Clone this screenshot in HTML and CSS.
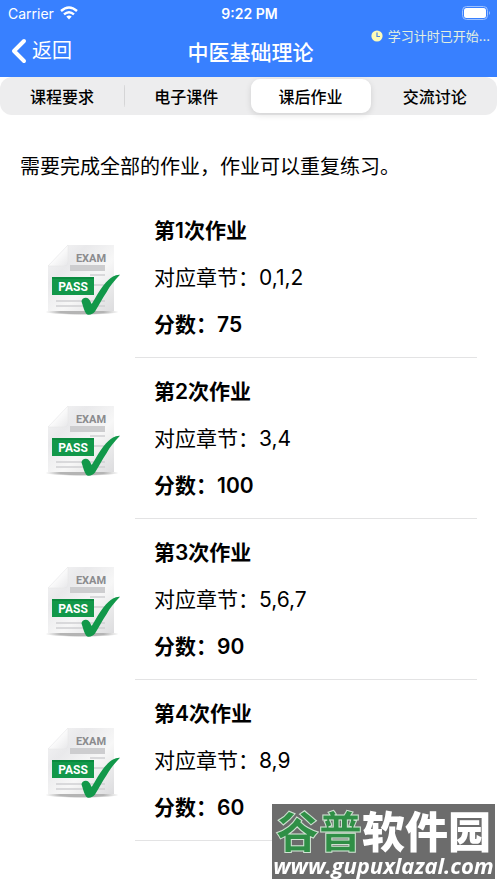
FILE: index.html
```html
<!DOCTYPE html>
<html lang="zh-CN">

<head>
    <meta charset="UTF-8">
    <meta name="viewport" content="width=device-width, initial-scale=1.0">
    <title>中医基础理论</title>
    <link rel="stylesheet" href="styles.css">
</head>

<body>
    <svg class="gradients" aria-hidden="true">
        <defs>
            <linearGradient id="paper" x1="0" y1="0" x2="1" y2="1">
                <stop offset="0" stop-color="#f6f6f7" />
                <stop offset="0.3" stop-color="#e9e9eb" />
                <stop offset="0.6" stop-color="#f7f7f7" />
                <stop offset="1" stop-color="#dcdcde" />
            </linearGradient>
            <linearGradient id="fold" x1="0" y1="0" x2="1" y2="1">
                <stop offset="0.4" stop-color="#ffffff" />
                <stop offset="1" stop-color="#e8e8ea" />
            </linearGradient>
            <radialGradient id="shade">
                <stop offset="0.6" stop-color="#b4b4b4" />
                <stop offset="1" stop-color="#ffffff" />
            </radialGradient>
        </defs>
    </svg>
    <svg class="symbols" aria-hidden="true">
        <symbol id="exam-pass" viewBox="0 -2 90 90">
            <ellipse cx="42" cy="77" rx="37" ry="3" fill="url(#shade)" />
            <path d="M28 10H74V76H8V31Z" fill="url(#paper)" />
            <path d="M28 10V27Q28 31 24 31H8Z" fill="url(#fold)" stroke="#e4e4e6" stroke-width="0.5" />
            <path d="M30 30H65V36H30Z" fill="#cdcdcf" />
            <path d="M50 40H65M50 50H65M16 66H65M16 71H65" stroke="#cfcfd2" stroke-width="1.5" />
            <text class="exam-text" x="51" y="27">EXAM</text>
            <path d="M12 42H54V60H12Z" fill="#12984a" />
            <path d="M12 42H54V44H12Z" fill="#0b8a3f" />
            <text class="pass-text" x="33" y="56">PASS</text>
            <path d="M41.500 66.500C41.500 64 44 62.500 46 62.700C49 63 50 65.500 51.700 69C56 62 59 56 63 51C67 46 70 43 73 41.500Q76 39.600 80 39.800C74 46 70 51 66.700 57C62 64 59 70 55 76.500C53 79.500 48 81 46 78.500C43.500 74.500 43 70.500 41.500 66.500Z" fill="#12984a" />
        </symbol>
    </svg>

    <header class="header">
        <div class="status-bar">
            <div class="carrier">
                <span>Carrier</span>
                <svg width="18" height="14" viewBox="0 0 18 14" fill="none" stroke="#fff" stroke-width="2.4">
                    <path d="M1 5Q9-2 17 5M4 8.4Q9 4 14 8.4" />
                    <path d="M6.3 10.6Q9 8.4 11.7 10.6L9 13.4Z" fill="#fff" stroke="none" />
                </svg>
            </div>
            <div class="clock">9:22 PM</div>
            <svg class="battery" width="29" height="14" viewBox="0 0 29 14">
                <rect x="0.5" y="0.5" width="25" height="13" rx="4" fill="none" stroke="#9dc1ff" />
                <rect x="2" y="2" width="22" height="10" rx="2.5" fill="#fff" />
                <path d="M27 5Q29 7 27 9Z" fill="#9dc1ff" />
            </svg>
        </div>
        <div class="nav-bar">
            <button class="back" type="button">
                <svg width="16" height="26" viewBox="0 0 16 26" fill="none" stroke="#fff" stroke-width="4" stroke-linecap="round" stroke-linejoin="round">
                    <path d="M13 3L3 13L13 23" />
                </svg>
                <span>返回</span>
            </button>
            <h1 class="title">中医基础理论</h1>
            <div class="timer">
                <svg width="12" height="12" viewBox="0 0 12 12">
                    <circle cx="6" cy="6" r="5.6" fill="#fdfbb8" />
                    <path d="M6 2.5V6.5H9" fill="none" stroke="#4a86e8" stroke-width="1.2" />
                </svg>
                <span>学习计时已开始...</span>
            </div>
        </div>
    </header>

    <nav class="tabs">
        <button class="tab" type="button">课程要求</button>
        <button class="tab divided" type="button">电子课件</button>
        <button class="tab active" type="button">课后作业</button>
        <button class="tab" type="button">交流讨论</button>
    </nav>

    <main>
        <p class="intro">需要完成全部的作业，作业可以重复练习。</p>
        <ul class="homework-list">
            <li class="homework">
                <svg class="homework-icon"><use href="#exam-pass" /></svg>
                <div class="homework-info">
                    <h2>第1次作业</h2>
                    <p>对应章节：0,1,2</p>
                    <p class="score">分数：75</p>
                </div>
            </li>
            <li class="homework">
                <svg class="homework-icon"><use href="#exam-pass" /></svg>
                <div class="homework-info">
                    <h2>第2次作业</h2>
                    <p>对应章节：3,4</p>
                    <p class="score">分数：100</p>
                </div>
            </li>
            <li class="homework">
                <svg class="homework-icon"><use href="#exam-pass" /></svg>
                <div class="homework-info">
                    <h2>第3次作业</h2>
                    <p>对应章节：5,6,7</p>
                    <p class="score">分数：90</p>
                </div>
            </li>
            <li class="homework">
                <svg class="homework-icon"><use href="#exam-pass" /></svg>
                <div class="homework-info">
                    <h2>第4次作业</h2>
                    <p>对应章节：8,9</p>
                    <p class="score">分数：60</p>
                </div>
            </li>
        </ul>
    </main>

    <div class="watermark">
        <div class="watermark-name"><span>谷普</span>软件园</div>
        <div class="watermark-url">www.gupuxlazal.com</div>
    </div>
</body>

</html>
```

FILE: styles.css
```css
* {
    box-sizing: border-box;
}

body {
    margin: 0;
    background: #fff;
    color: #000;
    font-family: Inter, "Noto Sans CJK SC", sans-serif;
    font-size: 20px;
}

h1,
h2,
p,
ul {
    margin: 0;
    padding: 0;
    font-size: inherit;
}

button {
    border: 0;
    padding: 0;
    background: none;
    color: inherit;
    font: inherit;
}

.gradients {
    position: absolute;
    width: 0;
    height: 0;
}

.symbols {
    display: none;
}

/* header */
.header {
    background: #3880ff;
    color: #fff;
}

.status-bar,
.nav-bar {
    display: grid;
    grid-template-columns: minmax(0, 1fr) auto minmax(0, 1fr);
    align-items: center;
}

.status-bar {
    height: 26px;
    padding: 0 6px 0 8px;
    font-size: 14px;
}

.carrier {
    display: flex;
    align-items: center;
    gap: 6px;
}

.clock {
    font-weight: 600;
}

.battery {
    justify-self: end;
}

.nav-bar {
    height: 51px;
    padding: 0 7px 2px 11px;
}

.back {
    display: flex;
    align-items: center;
    gap: 5px;
    line-height: 30px;
}

.title {
    font-size: 21px;
    font-weight: 500;
}

.timer {
    display: flex;
    align-items: center;
    align-self: start;
    justify-self: end;
    gap: 5px;
    font-size: 13px;
    line-height: 20px;
    color: #e3f0e0;
    white-space: nowrap;
}

/* segmented tabs */
.tabs {
    display: grid;
    grid-template-columns: repeat(4, 1fr);
    height: 38px;
    padding: 2px 0;
    border-radius: 12px;
    background: #ededee;
}

.tab {
    border-radius: 9px;
    font-size: 16px;
    font-weight: 500;
}

.tab.divided {
    background: linear-gradient(#d5d5d6, #d5d5d6) left center / 1px 22px no-repeat;
}

.tab.active {
    margin: 0 2px;
    background: #fff;
    box-shadow: 0 2px 6px rgba(0, 0, 0, 0.12);
}

/* homework list */
.intro {
    padding: 37px 20px 15px;
    line-height: 30px;
}

.homework-list {
    list-style: none;
    font-size: 21px;
}

.homework {
    display: flex;
    align-items: center;
    gap: 5px;
    padding: 0 20px 0 40px;
}

.homework-icon {
    width: 90px;
    height: 90px;
}

.homework-info {
    flex: 1;
    padding: 10px 0 9px 19px;
    border-bottom: 1px solid #e3e3e4;
    line-height: 47px;
}

.homework-info h2,
.score {
    font-weight: 600;
}

.exam-text,
.pass-text {
    font-family: Roboto, sans-serif;
    font-weight: 700;
    text-anchor: middle;
}

.exam-text {
    font-size: 11px;
    fill: #8b8b8e;
}

.pass-text {
    font-size: 12px;
    fill: #fff;
}

/* site badge over the page corner */
.watermark {
    position: fixed;
    right: 2px;
    bottom: 4px;
    width: 223px;
    height: 75px;
    padding-top: 7px;
    background: #6c6c6c;
    color: #fff;
    text-align: center;
    white-space: nowrap;
}

.watermark-name {
    font-size: 43px;
    font-weight: 900;
    line-height: 42px;
}

.watermark-name span {
    color: #2f8f46;
    -webkit-text-stroke: 1px #cfe3d2;
}

.watermark-url {
    font-family: "Open Sans", sans-serif;
    font-size: 22px;
    font-weight: 700;
    font-style: italic;
    line-height: 24px;
}
```
